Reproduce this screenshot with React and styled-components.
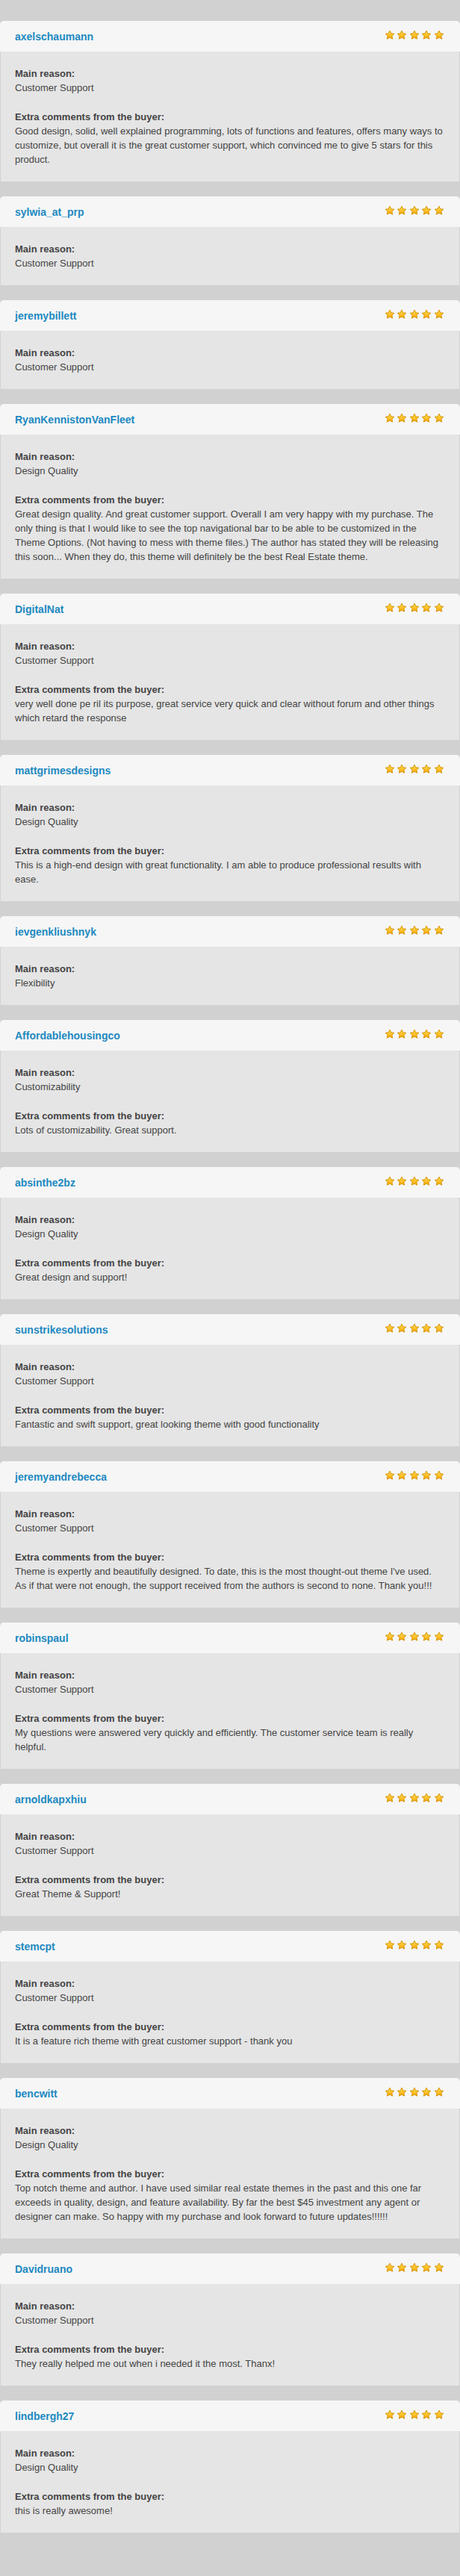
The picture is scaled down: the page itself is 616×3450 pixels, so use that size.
import React from "react";
import styled, { createGlobalStyle } from "styled-components";

const GlobalStyle = createGlobalStyle`
  html, body {
    margin: 0;
    padding: 0;
    background-color: #d2d1d2;
  }
  body {
    font-family: "Liberation Sans", Arial, sans-serif;
  }
`;

const Page = styled.div`
  padding: 28px 0 58px;
  display: flex;
  flex-direction: column;
  gap: 20px;
`;

const Card = styled.div`
  display: flex;
  flex-direction: column;
`;

const Header = styled.div`
  height: 41px;
  padding: 0 21px 0 20px;
  display: flex;
  align-items: center;
  justify-content: space-between;
  background-color: #f6f6f6;
  border-radius: 5px 5px 0 0;
`;

const Name = styled.span`
  font-size: 14px;
  font-weight: bold;
  color: #1d89c1;
  margin-top: 1px;
`;

const Stars = styled.div`
  display: flex;
  gap: 2.6px;
  margin-bottom: 3px;

  svg {
    width: 14px;
    height: 14px;
    display: block;
  }
`;

const Body = styled.div`
  margin: 0 1px;
  padding: 20px 19px 20px 19px;
  background-color: #e5e5e5;
  color: #444;
  font-size: 13px;
  line-height: 19px;
`;

const Section = styled.div`
  & + & {
    margin-top: 20px;
  }
`;

const Label = styled.div`
  font-weight: bold;
`;

const Text = styled.div``;

const Star = () => (
  <svg viewBox="0 0 24 24">
    <defs>
      <linearGradient id="starFill" x1="0" y1="0" x2="0" y2="1">
        <stop offset="0" stopColor="#ffe25a" />
        <stop offset="1" stopColor="#f7a600" />
      </linearGradient>
    </defs>
    <path
      d="M12 1.8l3.1 6.4 7 .9-5.1 4.9 1.3 6.9L12 17.6l-6.3 3.3 1.3-6.9-5.1-4.9 7-.9z"
      fill="url(#starFill)"
      stroke="#d48f00"
      strokeWidth="1.6"
      strokeLinejoin="round"
    />
  </svg>
);

const reviews = [
  {
    name: "axelschaumann",
    reason: "Customer Support",
    comment:
      "Good design, solid, well explained programming, lots of functions and features, offers many ways to customize, but overall it is the great customer support, which convinced me to give 5 stars for this product.",
  },
  { name: "sylwia_at_prp", reason: "Customer Support" },
  { name: "jeremybillett", reason: "Customer Support" },
  {
    name: "RyanKennistonVanFleet",
    reason: "Design Quality",
    comment:
      "Great design quality. And great customer support. Overall I am very happy with my purchase. The only thing is that I would like to see the top navigational bar to be able to be customized in the Theme Options. (Not having to mess with theme files.) The author has stated they will be releasing this soon... When they do, this theme will definitely be the best Real Estate theme.",
  },
  {
    name: "DigitalNat",
    reason: "Customer Support",
    comment:
      "very well done pe ril its purpose, great service very quick and clear without forum and other things which retard the response",
  },
  {
    name: "mattgrimesdesigns",
    reason: "Design Quality",
    comment:
      "This is a high-end design with great functionality. I am able to produce professional results with ease.",
  },
  { name: "ievgenkliushnyk", reason: "Flexibility" },
  {
    name: "Affordablehousingco",
    reason: "Customizability",
    comment: "Lots of customizability. Great support.",
  },
  {
    name: "absinthe2bz",
    reason: "Design Quality",
    comment: "Great design and support!",
  },
  {
    name: "sunstrikesolutions",
    reason: "Customer Support",
    comment:
      "Fantastic and swift support, great looking theme with good functionality",
  },
  {
    name: "jeremyandrebecca",
    reason: "Customer Support",
    comment:
      "Theme is expertly and beautifully designed. To date, this is the most thought-out theme I've used. As if that were not enough, the support received from the authors is second to none. Thank you!!!",
  },
  {
    name: "robinspaul",
    reason: "Customer Support",
    comment:
      "My questions were answered very quickly and efficiently. The customer service team is really helpful.",
  },
  {
    name: "arnoldkapxhiu",
    reason: "Customer Support",
    comment: "Great Theme & Support!",
  },
  {
    name: "stemcpt",
    reason: "Customer Support",
    comment: "It is a feature rich theme with great customer support - thank you",
  },
  {
    name: "bencwitt",
    reason: "Design Quality",
    comment:
      "Top notch theme and author. I have used similar real estate themes in the past and this one far exceeds in quality, design, and feature availability. By far the best $45 investment any agent or designer can make. So happy with my purchase and look forward to future updates!!!!!!",
  },
  {
    name: "Davidruano",
    reason: "Customer Support",
    comment: "They really helped me out when i needed it the most. Thanx!",
  },
  {
    name: "lindbergh27",
    reason: "Design Quality",
    comment: "this is really awesome!",
  },
];

const App = () => (
  <>
    <GlobalStyle />
    <Page>
      {reviews.map((item) => (
        <Card key={item.name}>
          <Header>
            <Name>{item.name}</Name>
            <Stars>
              {[0, 1, 2, 3, 4].map((i) => (
                <Star key={i} />
              ))}
            </Stars>
          </Header>
          <Body>
            <Section>
              <Label>Main reason:</Label>
              <Text>{item.reason}</Text>
            </Section>
            {item.comment && (
              <Section>
                <Label>Extra comments from the buyer:</Label>
                <Text>{item.comment}</Text>
              </Section>
            )}
          </Body>
        </Card>
      ))}
    </Page>
  </>
);

export default App;
